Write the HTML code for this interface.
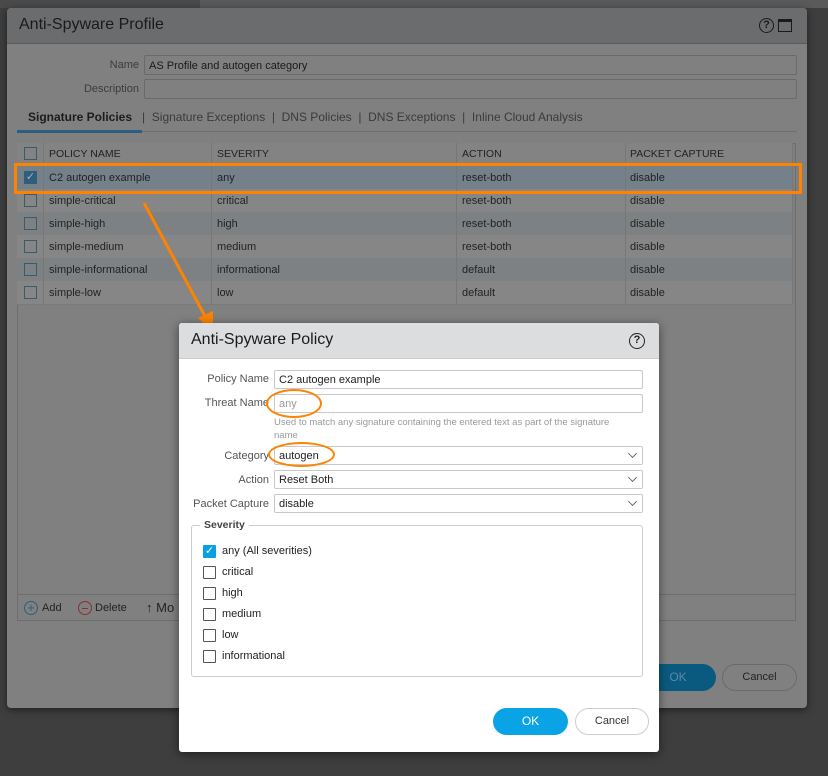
<!DOCTYPE html>
<html><head><style>
*{box-sizing:border-box;margin:0;padding:0}
body{width:828px;height:776px;background:#3e3e3e;font-family:"Liberation Sans",sans-serif;position:relative;overflow:hidden;font-size:11px;color:#222}
.a{position:absolute}
.od{left:7px;top:8px;width:800px;height:700px;background:#808080;border-radius:4px;box-shadow:0 2px 8px rgba(0,0,0,.5)}
.inp{position:absolute;border:1px solid #6a6a6a;background:#808080;border-radius:2px}
.lbl{position:absolute;text-align:right;color:#3c3c3c}
.row{position:absolute;left:17px;width:775px;height:23px;color:#222}
.cb{position:absolute;width:13px;height:13px;border:1px solid #3b5a6a;background:transparent}
.id{left:179px;top:323px;width:480px;height:429px;background:#fff;border-radius:3px;box-shadow:0 2px 10px rgba(0,0,0,.5)}
.ii{position:absolute;left:95px;width:369px;height:19px;border:1px solid #c8c8c8;border-radius:2px;font-size:11px;padding:3px 4px;color:#222}
.il{position:absolute;width:90px;text-align:right;color:#555;font-size:11px}
.chev{position:absolute;right:6px;top:3px;width:7px;height:7px;border-right:1px solid #666;border-bottom:1px solid #666;transform:rotate(45deg) scale(.9)}
.sc{position:absolute;width:13px;height:13px;border:1px solid #555;border-radius:1px}
.st{position:absolute;color:#222}
</style></head><body>
<div class="a" style="left:0;top:0;width:828px;height:8px;background:#4a4a4a"></div>
<div class="a" style="left:200px;top:0;width:950px;height:8px;background:#5a5a5a"></div>
<div class="od a">
 <div class="a" style="left:0;top:0;width:800px;height:36px;background:#6b6c6e;border-radius:4px 4px 0 0;border-bottom:1px solid #5a5a5a"></div>
 <div class="a" style="left:12px;top:8px;font-size:16px;color:#1a1a1a">Anti-Spyware Profile</div>
 <div class="a" style="left:752px;top:10px;width:15px;height:15px;border:1.5px solid #1a1a1a;border-radius:50%;font-size:11px;text-align:center;line-height:12px;font-weight:bold;color:#1a1a1a">?</div>
 <div class="a" style="left:771px;top:11px;width:14px;height:13px;border:1.5px solid #1a1a1a;border-top-width:3px"></div>
 <div class="lbl" style="left:40px;top:51px;width:92px">Name</div>
 <div class="inp" style="left:137px;top:47px;width:653px;height:20px;padding:4px 4px;color:#1a1a1a">AS Profile and autogen category</div>
 <div class="lbl" style="left:40px;top:75px;width:92px">Description</div>
 <div class="inp" style="left:137px;top:71px;width:653px;height:20px"></div>
 <div class="a" style="left:10px;top:123px;width:780px;height:1px;background:#6e6e6e"></div>
 <div class="a" style="left:10px;top:122px;width:125px;height:3px;background:#2a5f80"></div>
 <div class="a" style="left:21px;top:102px;font-size:12px;font-weight:bold;color:#1c1c1c">Signature Policies</div>
 <div class="a" style="left:135px;top:102px;font-size:12px;color:#3a3a3a">| &nbsp;Signature Exceptions &nbsp;| &nbsp;DNS Policies &nbsp;| &nbsp;DNS Exceptions &nbsp;| &nbsp;Inline Cloud Analysis</div>
</div>
<div class="a" style="left:17px;top:143px;width:779px;height:478px;border:1px solid #6e6e6e"></div>
<div class="a" style="left:17px;top:143px;width:775px;height:23px;background:#838383;border-bottom:1px solid #6e6e6e"></div>
<div class="a" style="left:17px;top:166px;width:775px;height:138px;background:#868686"></div>
<div class="row" style="top:166px;background:#74808a"></div>
<div class="row" style="top:212px;background:#7d8183"></div>
<div class="row" style="top:258px;background:#7d8183"></div>
<div class="a" style="left:17px;top:304px;width:775px;height:1px;background:#7a7a7a"></div>
<div class="a" style="left:43px;top:143px;width:1px;height:161px;background:#777"></div>
<div class="a" style="left:211px;top:143px;width:1px;height:161px;background:#777"></div>
<div class="a" style="left:456px;top:143px;width:1px;height:161px;background:#777"></div>
<div class="a" style="left:625px;top:143px;width:1px;height:161px;background:#777"></div>
<div class="a" style="left:792px;top:143px;width:1px;height:161px;background:#777"></div>
<div class="a" style="left:49px;top:148px;font-size:10.5px;color:#222">POLICY NAME</div>
<div class="a" style="left:217px;top:148px;font-size:10.5px;color:#222">SEVERITY</div>
<div class="a" style="left:462px;top:148px;font-size:10.5px;color:#222">ACTION</div>
<div class="a" style="left:630px;top:148px;font-size:10.5px;color:#222">PACKET CAPTURE</div>
<div class="cb" style="left:24px;top:147px"></div>
<div class="cb" style="left:24px;top:171px;background:#2a5f80;color:#aac;font-size:11px;line-height:11px;text-align:center">✓</div>
<div class="cb" style="left:24px;top:194px"></div>
<div class="cb" style="left:24px;top:217px"></div>
<div class="cb" style="left:24px;top:240px"></div>
<div class="cb" style="left:24px;top:263px"></div>
<div class="cb" style="left:24px;top:286px"></div>
<div class="a" style="left:49px;top:167px;line-height:23px">C2 autogen example<br>simple-critical<br>simple-high<br>simple-medium<br>simple-informational<br>simple-low</div>
<div class="a" style="left:217px;top:167px;line-height:23px">any<br>critical<br>high<br>medium<br>informational<br>low</div>
<div class="a" style="left:462px;top:167px;line-height:23px">reset-both<br>reset-both<br>reset-both<br>reset-both<br>default<br>default</div>
<div class="a" style="left:630px;top:167px;line-height:23px">disable<br>disable<br>disable<br>disable<br>disable<br>disable</div>
<div class="a" style="left:17px;top:594px;width:779px;height:1px;background:#6e6e6e"></div>
<div class="a" style="left:24px;top:601px;width:14px;height:14px;border:1px solid #2a5f80;border-radius:50%;color:#2a5f80;text-align:center;line-height:12px;font-size:13px">+</div>
<div class="a" style="left:42px;top:602px;color:#222">Add</div>
<div class="a" style="left:78px;top:601px;width:14px;height:14px;border:1px solid #8a3030;border-radius:50%"><div class="a" style="left:3px;top:6px;width:6px;height:1px;background:#8a3030"></div></div>
<div class="a" style="left:95px;top:602px;color:#222">Delete</div>
<div class="a" style="left:146px;top:600px;color:#222;font-size:13px">↑ Mo</div>
<div class="a" style="left:640px;top:664px;width:76px;height:27px;background:#0a5a80;border-radius:14px;color:#5c8aa3;text-align:center;line-height:27px;font-size:12px">OK</div>
<div class="a" style="left:722px;top:664px;width:75px;height:27px;border:1px solid #6a6a6a;border-radius:14px;color:#222;text-align:center;line-height:25px;font-size:11px">Cancel</div>
<div class="a" style="left:14px;top:163px;width:788px;height:31px;border:3px solid #ff8200"></div>
<svg class="a" style="left:0;top:0" width="828" height="776"><line x1="144" y1="203" x2="206" y2="318" stroke="#ff8200" stroke-width="3"/><polygon points="213,332 198,318 213,311" fill="#ff8200"/></svg>
<div class="id a">
 <div class="a" style="left:0;top:0;width:480px;height:36px;background:#dcdddf;border-radius:3px 3px 0 0;border-bottom:1px solid #ccc"></div>
 <div class="a" style="left:12px;top:8px;font-size:16px;color:#1a1a1a">Anti-Spyware Policy</div>
 <div class="a" style="left:450px;top:10px;width:16px;height:16px;border:1.5px solid #222;border-radius:50%;text-align:center;line-height:13px;font-weight:bold;font-size:11px">?</div>
 <div class="il" style="left:0;top:50px">Policy Name</div>
 <div class="ii" style="top:47px">C2 autogen example</div>
 <div class="il" style="left:0;top:74px">Threat Name</div>
 <div class="ii" style="top:71px;color:#999">any</div>
 <div class="a" style="left:95px;top:93px;font-size:9.5px;color:#999;line-height:13px;width:345px">Used to match any signature containing the entered text as part of the signature name</div>
 <div class="il" style="left:0;top:127px">Category</div>
 <div class="ii" style="top:123px">autogen<div class="chev"></div></div>
 <div class="il" style="left:0;top:151px">Action</div>
 <div class="ii" style="top:147px">Reset Both<div class="chev"></div></div>
 <div class="il" style="left:0;top:175px">Packet Capture</div>
 <div class="ii" style="top:171px">disable<div class="chev"></div></div>
 <div class="a" style="left:12px;top:202px;width:452px;height:152px;border:1px solid #ccc;border-radius:3px">
  <div class="a" style="left:8px;top:-7px;background:#fff;padding:0 4px;color:#444;font-weight:bold;font-size:10.5px">Severity</div>
  <div class="sc" style="top:19px;left:11px;background:#0aa0e0;border-color:#0aa0e0;color:#fff;font-size:11px;line-height:11px;text-align:center">✓</div>
  <div class="st" style="top:19px;left:30px">any (All severities)</div>
  <div class="sc" style="top:40px;left:11px"></div><div class="st" style="top:40px;left:30px">critical</div>
  <div class="sc" style="top:61px;left:11px"></div><div class="st" style="top:61px;left:30px">high</div>
  <div class="sc" style="top:82px;left:11px"></div><div class="st" style="top:82px;left:30px">medium</div>
  <div class="sc" style="top:103px;left:11px"></div><div class="st" style="top:103px;left:30px">low</div>
  <div class="sc" style="top:124px;left:11px"></div><div class="st" style="top:124px;left:30px">informational</div>
 </div>
 <div class="a" style="left:314px;top:385px;width:75px;height:27px;background:#0aa4e6;border-radius:14px;color:#fff;text-align:center;line-height:27px;font-size:12px">OK</div>
 <div class="a" style="left:396px;top:385px;width:74px;height:27px;border:1px solid #ccc;border-radius:14px;color:#333;text-align:center;line-height:25px;font-size:11px">Cancel</div>
</div>
<div class="a" style="left:266px;top:389px;width:56px;height:29px;border:2.5px solid #ff8200;border-radius:50%"></div>
<div class="a" style="left:268px;top:442px;width:67px;height:25px;border:2.5px solid #ff8200;border-radius:50%"></div>
</body></html>
